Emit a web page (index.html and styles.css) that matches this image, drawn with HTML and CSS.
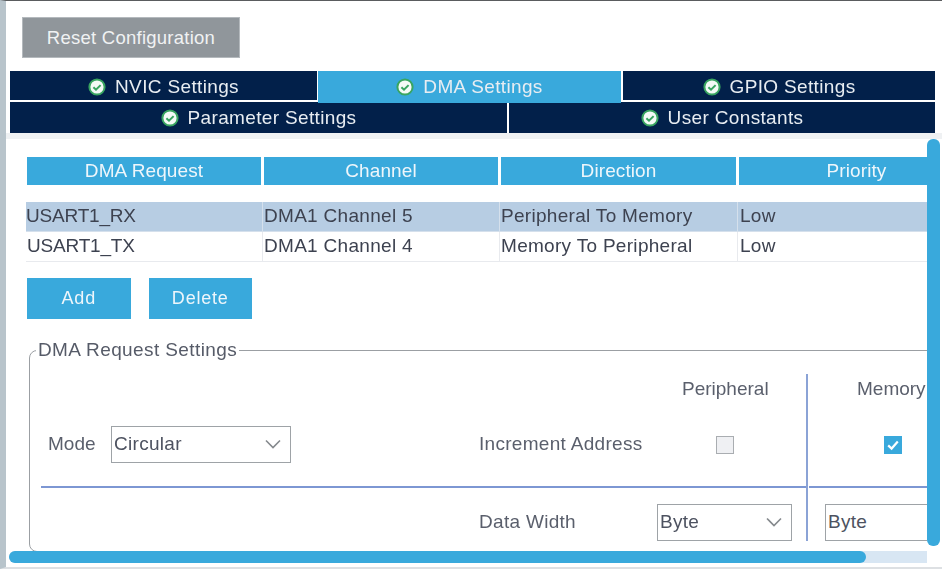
FILE: index.html

```html
<!DOCTYPE html>
<html lang="en">
<head>
  <meta charset="UTF-8">
  <meta name="viewport" content="width=device-width, initial-scale=1.0">
  <title>DMA Settings</title>
  <link rel="stylesheet" href="styles.css">
</head>
<body>
  <div class="app">
    <div class="top">
      <button class="reset">Reset Configuration</button>
      <div class="tabs">
        <div class="tab-row tab-row-one">
          <div class="tab"><svg class="ok" viewBox="0 0 18 18"><circle cx="9" cy="9" r="7.6"/><path d="M5.4 9.2l2.6 2.5 4.6-4.6"/></svg>NVIC Settings</div>
          <div class="tab active"><svg class="ok" viewBox="0 0 18 18"><circle cx="9" cy="9" r="7.6"/><path d="M5.4 9.2l2.6 2.5 4.6-4.6"/></svg>DMA Settings</div>
          <div class="tab"><svg class="ok" viewBox="0 0 18 18"><circle cx="9" cy="9" r="7.6"/><path d="M5.4 9.2l2.6 2.5 4.6-4.6"/></svg>GPIO Settings</div>
        </div>
        <div class="tab-row tab-row-two">
          <div class="tab"><svg class="ok" viewBox="0 0 18 18"><circle cx="9" cy="9" r="7.6"/><path d="M5.4 9.2l2.6 2.5 4.6-4.6"/></svg>Parameter Settings</div>
          <div class="tab"><svg class="ok" viewBox="0 0 18 18"><circle cx="9" cy="9" r="7.6"/><path d="M5.4 9.2l2.6 2.5 4.6-4.6"/></svg>User Constants</div>
        </div>
      </div>
    </div>

    <div class="scroll-area">
      <div class="viewport">
        <div class="content">
          <div class="dma-row dma-head">
            <div>DMA Request</div>
            <div>Channel</div>
            <div>Direction</div>
            <div>Priority</div>
          </div>
          <div class="dma-row dma-item selected">
            <div>USART1_RX</div>
            <div>DMA1 Channel 5</div>
            <div>Peripheral To Memory</div>
            <div>Low</div>
          </div>
          <div class="dma-row dma-item">
            <div>USART1_TX</div>
            <div>DMA1 Channel 4</div>
            <div>Memory To Peripheral</div>
            <div>Low</div>
          </div>

          <div class="actions">
            <button class="action">Add</button>
            <button class="action">Delete</button>
          </div>

          <fieldset class="settings">
            <legend>DMA Request Settings</legend>
            <div class="settings-grid">
              <div class="col-head col-peripheral">Peripheral</div>
              <div class="col-head col-memory">Memory</div>
              <div class="vline"></div>

              <div class="mode">
                <span>Mode</span>
                <div class="select select-mode">Circular<svg class="chevron" viewBox="0 0 16 10"><path d="M1 1.5l7 7 7-7"/></svg></div>
              </div>
              <div class="label label-inc">Increment Address</div>
              <div class="check-cell col-peripheral row-inc"><span class="check"></span></div>
              <div class="check-cell col-memory row-inc">
                <span class="check checked"><svg viewBox="0 0 18 18"><path d="M4.2 9.4l3.4 3.2 6.2-7"/></svg></span>
              </div>

              <div class="rule rule-left"></div>
              <div class="rule rule-right"></div>

              <div class="label label-width">Data Width</div>
              <div class="width-cell col-peripheral">
                <div class="select select-width">Byte<svg class="chevron" viewBox="0 0 16 10"><path d="M1 1.5l7 7 7-7"/></svg></div>
              </div>
              <div class="width-cell col-memory">
                <div class="select select-width">Byte<svg class="chevron" viewBox="0 0 16 10"><path d="M1 1.5l7 7 7-7"/></svg></div>
              </div>
            </div>
          </fieldset>
        </div>
      </div>

      <div class="track-x"><div class="thumb-x"></div></div>
      <div class="thumb-y"></div>
    </div>
  </div>
</body>
</html>
```

FILE: styles.css

```css
html, body {
    margin: 0;
    padding: 0;
    background: #fff;
}

body {
    font-family: "Liberation Sans", Arial, sans-serif;
    color: #4d5260;
}

.app {
    width: 942px;
    height: 569px;
    box-sizing: border-box;
    border-top: 1px solid #5a5c5e;
    border-left: 6px solid #b8c4cb;
    border-bottom: 2px solid #dde0e3;
    display: flex;
    flex-direction: column;
    overflow: hidden;
    filter: blur(0.35px);
}

.top {
    height: 138px;
    flex: none;
    padding: 16px 0 0 4px;
    box-sizing: border-box;
    border-bottom: 6px solid #eff1f3;
}

.reset {
    display: block;
    width: 218px;
    height: 41px;
    margin: 0 0 13px 12px;
    padding: 0;
    border: 1px solid #b4b9bd;
    background-color: #90969b;
    color: #f0f2f3;
    font-family: inherit;
    font-size: 18.5px;
    letter-spacing: 0.25px;
}

.tabs {
    width: 925px;
    color: #e8edf2;
    font-size: 19px;
    letter-spacing: 0.35px;
}

.tab-row {
    display: flex;
    position: relative;
}

.tab-row-one {
    height: 29px;
    gap: 1px;
    margin-bottom: 2px;
}

.tab-row-two {
    height: 31px;
    gap: 2px;
}

.tab {
    display: flex;
    align-items: center;
    justify-content: center;
    background-color: #02204a;
}

.tab-row-one .tab {
    padding-top: 3px;
    box-sizing: border-box;
}

.tab-row-one .tab:nth-child(1) {
    width: 307px;
}

.tab-row-one .tab:nth-child(3) {
    width: 312px;
    margin-left: 1px;
}

.tab-row-two .tab:nth-child(1) {
    width: 497px;
}

.tab-row-two .tab:nth-child(2) {
    width: 426px;
}

.tab-row-one .tab.active {
    width: 303px;
    height: 32px;
    padding-top: 0;
    background-color: #39a9dc;
    z-index: 1; /* over the second row */
}

.ok {
    width: 18px;
    height: 18px;
    margin-right: 9px;
    flex: none;
    fill: #f4faf6;
    stroke: #39a560;
}

.ok circle {
    stroke-width: 2;
}

.ok path {
    fill: none;
    stroke-width: 2;
}

.scroll-area {
    position: relative;
    flex: 1;
    overflow: hidden;
}

.viewport {
    width: 921px;
    height: 100%;
    overflow: hidden;
}

.content {
    width: 1000px;
    padding: 18px 0 0 20px;
}

.dma-row {
    display: grid;
    grid-template-columns: 237px 237px 238px 238px;
}

.dma-head {
    height: 28px;
    margin-bottom: 17px;
    line-height: 28px;
    color: #eef6fb;
    font-size: 19px;
    letter-spacing: 0.1px;
    text-align: center;
}

.dma-head div {
    margin: 0 2px 0 1px;
    background-color: #39a9dc;
}

.dma-item {
    height: 30px;
    box-sizing: border-box;
    border-bottom: 1.5px solid #e8eaee;
    line-height: 28px;
    font-size: 19px;
    letter-spacing: 0.3px;
    color: #3d4250;
}

.dma-item div {
    padding-left: 1px;
    border-right: 1.5px solid #e8eaee;
}

.dma-item div:first-child {
    letter-spacing: -0.2px;
}

.dma-item div:last-child {
    padding-left: 2px;
    border-right: none;
}

.dma-item.selected {
    background-color: #b7cde3;
    border-bottom-color: #d5e0ec;
}

.dma-item.selected div {
    border-right-color: #d5e0ec;
}

.dma-item.selected div:first-child {
    padding-left: 0;
}

.actions {
    display: flex;
    gap: 18px;
    margin: 16px 0 20px 1px;
}

.action {
    width: 103.5px;
    height: 41px;
    padding: 0;
    border: none;
    background-color: #39a9dc;
    color: #eef6fb;
    font-family: inherit;
    font-size: 18px;
    letter-spacing: 0.8px;
}

.settings {
    margin: 0 0 0 3px;
    padding: 13px 0 10px 11px;
    border: 1.5px solid #9b9fa3;
    border-radius: 8px;
    min-width: 0;
    width: 960px;
    box-sizing: border-box;
}

.settings legend {
    margin-left: -5px;
    padding: 0 2px;
    font-size: 19px;
    letter-spacing: 0.4px;
    line-height: 22px;
    color: #565b68;
}

.settings-grid {
    display: grid;
    grid-template-columns: 438px 178px 149px 2px 2px 150px;
    grid-template-rows: 29px 83px 2px 53px;
    font-size: 19px;
    color: #5a5f6c;
}

.col-head {
    grid-row: 1;
    align-self: center;
    white-space: nowrap;
}

.col-peripheral {
    grid-column: 3;
}

.col-memory {
    grid-column: 6;
    padding-left: 15px;
}

.col-head.col-peripheral {
    padding-left: 25px;
}

.col-head.col-memory {
    padding-left: 47px;
}

.vline {
    grid-column: 4;
    grid-row: 1 / 5;
    background-color: #8ba3d6;
}

.mode {
    grid-column: 1;
    grid-row: 2;
    display: flex;
    align-items: center;
    padding: 0 0 1px 7px;
}

.mode span {
    width: 63px;
}

.label {
    grid-column: 2;
    align-self: center;
    white-space: nowrap;
    letter-spacing: 0.3px;
}

.label-inc {
    grid-row: 2;
    padding-bottom: 2px;
}

.label-width {
    grid-row: 4;
    align-self: end;
    line-height: 37px;
    padding-bottom: 1px;
}

.check-cell {
    display: flex;
    align-items: center;
}

.check-cell.col-peripheral {
    padding-left: 59px;
}

.check-cell.col-memory {
    padding-left: 74px;
}

.row-inc {
    grid-row: 2;
}

.check {
    display: block;
    width: 18px;
    height: 18px;
    box-sizing: border-box;
    border: 1.5px solid #a9adb1;
    background-color: #eff0f3;
}

.check.checked {
    border: none;
    background-color: #39a9dc;
}

.check svg {
    display: block;
    fill: none;
    stroke: #fff;
    stroke-width: 2.2;
}

.rule {
    grid-row: 3;
    height: 1.5px;
    background-color: #7d97d3;
}

.rule-left {
    grid-column: 1 / 4;
}

.rule-right {
    grid-column: 5 / 7;
    margin-left: 1px;
}

.width-cell {
    grid-row: 4;
    align-self: end;
}

.select {
    display: flex;
    align-items: center;
    justify-content: space-between;
    height: 37px;
    box-sizing: border-box;
    padding: 0 9px 1px 2px;
    border: 1.5px solid #9ea3a7;
    letter-spacing: 0.3px;
    color: #4d5260;
    background-color: #fff;
}

.select-mode {
    width: 180px;
}

.select-width {
    width: 135px;
}

.chevron {
    width: 16px;
    height: 10px;
    fill: none;
    stroke: #85898d;
    stroke-width: 1.6;
}

.track-x {
    position: absolute;
    left: 3px;
    top: 412px;
    width: 918px;
    height: 12px;
    background-color: #d8e6f3;
    border-radius: 6px 0 0 6px;
}

.thumb-x {
    width: 857px;
    height: 12px;
    background-color: #39a9dc;
    border-radius: 6px;
}

.thumb-y {
    position: absolute;
    left: 921px;
    top: 0;
    width: 13px;
    height: 407px;
    background-color: #39a9dc;
    border-radius: 6px;
}
```
